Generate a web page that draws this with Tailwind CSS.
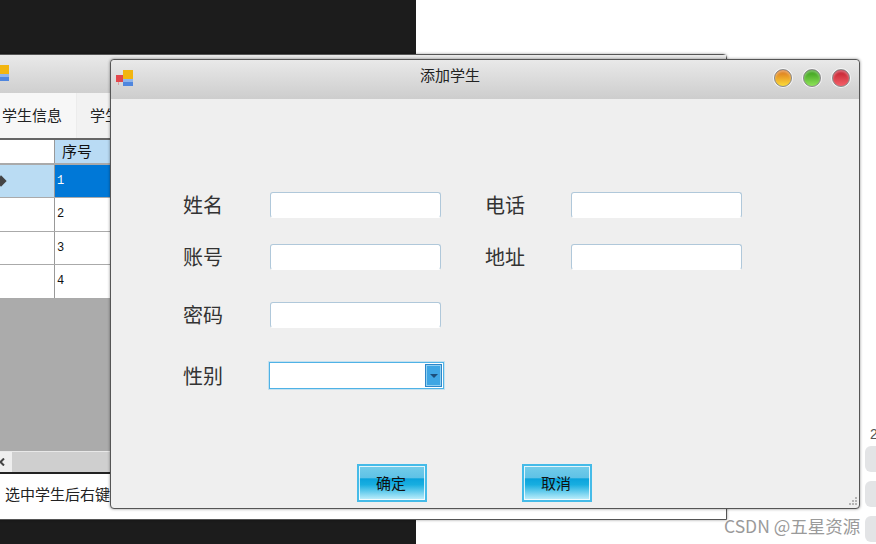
<!DOCTYPE html>
<html lang="zh-CN">
<head>
<meta charset="UTF-8">
<script src="https://cdn.jsdelivr.net/npm/@tailwindcss/browser@4"></script>
<title>添加学生</title>
</head>
<body class="bg-white font-['Noto_Sans_CJK_SC','Noto_Sans',sans-serif]">
<div class="relative w-[876px] h-[544px] overflow-hidden bg-white">
  <div class="absolute left-0 top-0 w-[416px] h-[544px] bg-[#1c1c1c]"></div>

  <!-- back window -->
  <div class="absolute left-[-20px] top-[54px] w-[747px] h-[466px] flex flex-col bg-white border border-[#555] rounded-t-[4px] shadow-[0_0_3px_rgba(0,0,0,0.4)]">
    <div class="h-[38px] shrink-0 relative bg-gradient-to-b from-[#e9e9e9] to-[#cfcfcf]">
      <svg class="absolute left-[11px] top-[9px]" width="17" height="17" viewBox="0 0 17 17">
        <rect x="8" y="1" width="9" height="9" fill="#f2b50f"/><rect x="8" y="10" width="9" height="3" fill="#8fb4ea"/><rect x="8" y="13" width="9" height="4" fill="#4f86de"/>
      </svg>
    </div>
    <div class="h-[47px] shrink-0 flex items-center bg-[#f2f2f2] text-[15px] text-[#222] border-b-2 border-[#666]">
      <div class="w-[96px] h-full pl-[21px] flex items-center whitespace-nowrap bg-[#f7f7f7] border-r border-[#ececec]">学生信息</div>
      <div class="pl-[13px] whitespace-nowrap">学生管理</div>
    </div>
    <div class="flex flex-col flex-1 min-h-0 font-['Liberation_Mono',monospace] text-[12px]">
      <div class="h-[25px] flex border-b-2 border-[#aaa] text-[15px] font-['Noto_Sans_CJK_SC',sans-serif]">
        <div class="w-[74px] bg-white border-r border-[#999]"></div>
        <div class="flex-1 bg-[#b9dbf4] pl-[7px] leading-[22px] text-[#111]">序号</div>
      </div>
      <div class="h-[33px] flex border-b border-[#aaa]">
        <div class="w-[74px] bg-[#badcf3] border-r border-[#999] relative">
          <div class="absolute left-[16px] top-[12px] w-[8px] h-[8px] rotate-45 bg-[#444]"></div>
        </div>
        <div class="flex-1 bg-[#0078d7] text-white pl-[2px] leading-[32px]">1</div>
      </div>
      <div class="h-[34px] flex border-b border-[#aaa]">
        <div class="w-[74px] bg-white border-r border-[#999]"></div>
        <div class="flex-1 pl-[2px] leading-[33px] text-[#111]">2</div>
      </div>
      <div class="h-[33px] flex border-b border-[#aaa]">
        <div class="w-[74px] bg-white border-r border-[#999]"></div>
        <div class="flex-1 pl-[2px] leading-[32px] text-[#111]">3</div>
      </div>
      <div class="h-[34px] flex border-b border-[#aaa]">
        <div class="w-[74px] bg-white border-r border-[#999]"></div>
        <div class="flex-1 pl-[2px] leading-[33px] text-[#111]">4</div>
      </div>
      <div class="flex-1 bg-[#ababab]"></div>
    </div>
    <div class="h-[21px] shrink-0 flex bg-[#cfcfcf] border-t border-[#e8e8e8]">
      <div class="w-[31px] bg-[#eeeeee] relative">
        <svg class="absolute left-[18px] top-[6px]" width="6" height="8" viewBox="0 0 6 8" fill="none" stroke="#444" stroke-width="2"><path d="M5 0.5 L1.5 4 L5 7.5"/></svg>
      </div>
    </div>
    <div class="h-[47px] shrink-0 border-t-2 border-[#222] pl-[24px] pt-[10px] text-[15px] leading-[20px] text-[#222] whitespace-nowrap">选中学生后右键可操作</div>
  </div>

  <!-- dialog -->
  <div class="absolute left-[110px] top-[59px] w-[750px] h-[450px] flex flex-col bg-[#efefef] border border-[#555] rounded-[4px] shadow-[0_0_3px_rgba(0,0,0,0.45)]">
    <div class="relative h-[39px] shrink-0 flex items-center justify-center pr-[70px] rounded-t-[4px] bg-gradient-to-b from-[#e9e9e9] to-[#cdcdcd] text-[15px] text-[#222]">
      <svg class="absolute left-[4px] top-[9px]" width="19" height="19" viewBox="0 0 19 19">
        <rect x="8" y="1" width="10" height="9" fill="#f2b50f"/>
        <rect x="8" y="10" width="10" height="3" fill="#8fb4ea"/>
        <rect x="8" y="13" width="10" height="4" fill="#4f86de"/>
        <rect x="1" y="6" width="7" height="7" fill="#e3474c"/>
        <rect x="3" y="13" width="1" height="3" fill="#d8a0a0"/>
      </svg>
      <span class="mt-[-9px]">添加学生</span>
      <div class="absolute right-[9px] top-[9px] flex gap-[11px]">
        <div class="w-[18px] h-[18px] rounded-full border border-[#8a8a8a] shadow-[0_0_0_1px_rgba(255,255,255,0.7),inset_0_2px_2px_rgba(255,255,255,0.35)] bg-gradient-to-b from-[#d9701a] to-[#fbdc3a]"></div>
        <div class="w-[18px] h-[18px] rounded-full border border-[#8a8a8a] shadow-[0_0_0_1px_rgba(255,255,255,0.7),inset_0_2px_2px_rgba(255,255,255,0.35)] bg-gradient-to-b from-[#2f9a10] to-[#8fe45a]"></div>
        <div class="w-[18px] h-[18px] rounded-full border border-[#8a8a8a] shadow-[0_0_0_1px_rgba(255,255,255,0.7),inset_0_2px_2px_rgba(255,255,255,0.35)] bg-gradient-to-b from-[#c0142a] to-[#f4606a]"></div>
      </div>
    </div>

    <div class="relative flex-1 pl-[72px] pt-[92px] text-[20px] text-[#333]">
      <div class="flex items-center h-[27px]">
        <div class="w-[87px] leading-[27px] mt-[-1px]">姓名</div>
        <div class="w-[171px] h-[26px] bg-white rounded-[3px] border border-[#b0c8da] border-b-white"></div>
        <div class="w-[86px] ml-[44px] leading-[27px] mt-[-1px]">电话</div>
        <div class="w-[171px] h-[26px] bg-white rounded-[3px] border border-[#b0c8da] border-b-white"></div>
      </div>
      <div class="flex items-center h-[27px] mt-[25px]">
        <div class="w-[87px] leading-[27px]">账号</div>
        <div class="w-[171px] h-[26px] bg-white rounded-[3px] border border-[#b0c8da] border-b-white"></div>
        <div class="w-[86px] ml-[44px] leading-[27px]">地址</div>
        <div class="w-[171px] h-[26px] bg-white rounded-[3px] border border-[#b0c8da] border-b-white"></div>
      </div>
      <div class="flex items-center h-[27px] mt-[31px]">
        <div class="w-[87px] leading-[27px] mt-[-1px]">密码</div>
        <div class="w-[171px] h-[26px] bg-white rounded-[3px] border border-[#b0c8da] border-b-white"></div>
      </div>
      <div class="flex items-center h-[27px] mt-[34px]">
        <div class="w-[86px] leading-[27px]">性别</div>
        <div class="w-[175px] h-[27px] bg-white border border-[#4fb2e6] shadow-[0_0_0_1px_rgba(120,200,240,0.35)] flex justify-end items-center pr-[1px]">
          <div class="w-[17px] h-[23px] bg-[#3fa6e4] border border-[#2f86c8] shadow-[inset_0_0_0_1px_#8fd0f2] flex items-center justify-center">
            <div class="w-0 h-0 border-x-[4px] border-x-transparent border-t-[4px] border-t-[#1c4f7c]"></div>
          </div>
        </div>
      </div>
      <div class="flex mt-[75px] ml-[174px] gap-[95px] text-[15px] text-[#111]">
        <div class="w-[70px] h-[38px] pr-[2px] border-2 border-[#45bbe8] shadow-[inset_0_0_0_1px_rgba(255,255,255,0.8)] flex items-center justify-center bg-[linear-gradient(#74cdea_0%,#5fc2e6_34%,#0ba3dc_38%,#18aee0_55%,#c4f0fc_100%)]">确定</div>
        <div class="w-[70px] h-[38px] pr-[2px] border-2 border-[#45bbe8] shadow-[inset_0_0_0_1px_rgba(255,255,255,0.8)] flex items-center justify-center bg-[linear-gradient(#74cdea_0%,#5fc2e6_34%,#0ba3dc_38%,#18aee0_55%,#c4f0fc_100%)]">取消</div>
      </div>
      <svg class="absolute right-[1px] bottom-[1px]" width="11" height="11" viewBox="0 0 11 11" fill="#b5b5b5">
        <rect x="8" y="1" width="2" height="2"/><rect x="5" y="4" width="2" height="2"/><rect x="8" y="4" width="2" height="2"/>
        <rect x="2" y="7" width="2" height="2"/><rect x="5" y="7" width="2" height="2"/><rect x="8" y="7" width="2" height="2"/>
      </svg>
    </div>
  </div>

  <!-- page behind, right edge -->
  <div class="absolute left-[870px] top-[424px] text-[14px] leading-[20px] text-[#555] font-['Liberation_Sans',sans-serif]">2</div>
  <div class="absolute left-[865px] top-[446px] flex flex-col gap-[9px]">
    <div class="w-[30px] h-[26px] rounded-[6px] bg-[#e3e4e6]"></div>
    <div class="w-[30px] h-[26px] rounded-[6px] bg-[#e3e4e6]"></div>
    <div class="w-[30px] h-[26px] rounded-[6px] bg-[#e3e4e6]"></div>
  </div>
  <div class="absolute left-[724px] top-[514px] text-[17.5px] leading-[24px] text-[#9a9a9a] whitespace-nowrap">CSDN @五星资源</div>
</div>
</body>
</html>
